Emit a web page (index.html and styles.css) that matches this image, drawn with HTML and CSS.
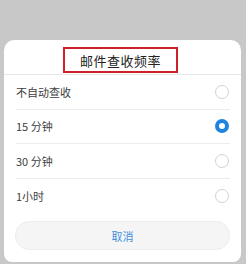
FILE: index.html
```html
<!DOCTYPE html>
<html lang="zh">
<head>
<meta charset="utf-8">
<link rel="stylesheet" href="styles.css">
</head>
<body>
<div class="dialog">
  <div class="header">
    <div class="title-box">邮件查收频率</div>
  </div>
  <ul class="options">
    <li class="option"><span class="label">不自动查收</span><span class="radio"></span></li>
    <li class="option"><span class="label">15 分钟</span><span class="radio checked"></span></li>
    <li class="option"><span class="label">30 分钟</span><span class="radio"></span></li>
    <li class="option"><span class="label">1小时</span><span class="radio"></span></li>
  </ul>
  <div class="footer">
    <button class="cancel">取消</button>
  </div>
</div>
</body>
</html>
```
FILE: styles.css
```css
html, body {
  margin: 0;
  padding: 0;
  background: #c8c8c8;
  font-family: "Noto Sans CJK SC", "Noto Sans", sans-serif;
}
.dialog {
  margin: 40px 0 0 4px;
  width: 237px;
  height: 222px;
  background: #fff;
  border-radius: 10px 10px 8px 8px;
  display: flex;
  flex-direction: column;
  box-sizing: border-box;
}
.header {
  height: 35px;
  box-sizing: border-box;
  border-bottom: 1px solid #e6e6e6;
  display: flex;
  justify-content: center;
  padding: 7px 4px 0 0;
}
.title-box {
  width: 115px;
  height: 26px;
  box-sizing: border-box;
  border: 2px solid #cf1f2b;
  font-size: 13px;
  color: #222;
  display: flex;
  align-items: center;
  justify-content: center;
  letter-spacing: 0.5px;
}
.options {
  list-style: none;
  margin: 0;
  padding: 0 11px 0 12px;
}
.option {
  height: 34.5px;
  box-sizing: border-box;
  border-bottom: 1px solid #ececec;
  display: flex;
  align-items: center;
  justify-content: space-between;
  padding-right: 1px;
}
.option:last-child {
  border-bottom: none;
}
.label {
  font-size: 11px;
  color: #404040;
}
.radio {
  width: 14px;
  height: 14px;
  box-sizing: border-box;
  border-radius: 50%;
  border: 1px solid #d2d2d2;
  background: #fff;
}
.radio.checked {
  border: 4px solid #1e84e0;
}
.footer {
  padding: 8px 11px 0 11px;
}
.cancel {
  display: block;
  width: 100%;
  height: 29px;
  border: 1px solid #ededed;
  border-radius: 14px;
  background: #f5f5f5;
  color: #3f8fdc;
  font-family: "Noto Sans CJK SC", sans-serif;
  font-size: 11px;
  padding: 0;
}
```
